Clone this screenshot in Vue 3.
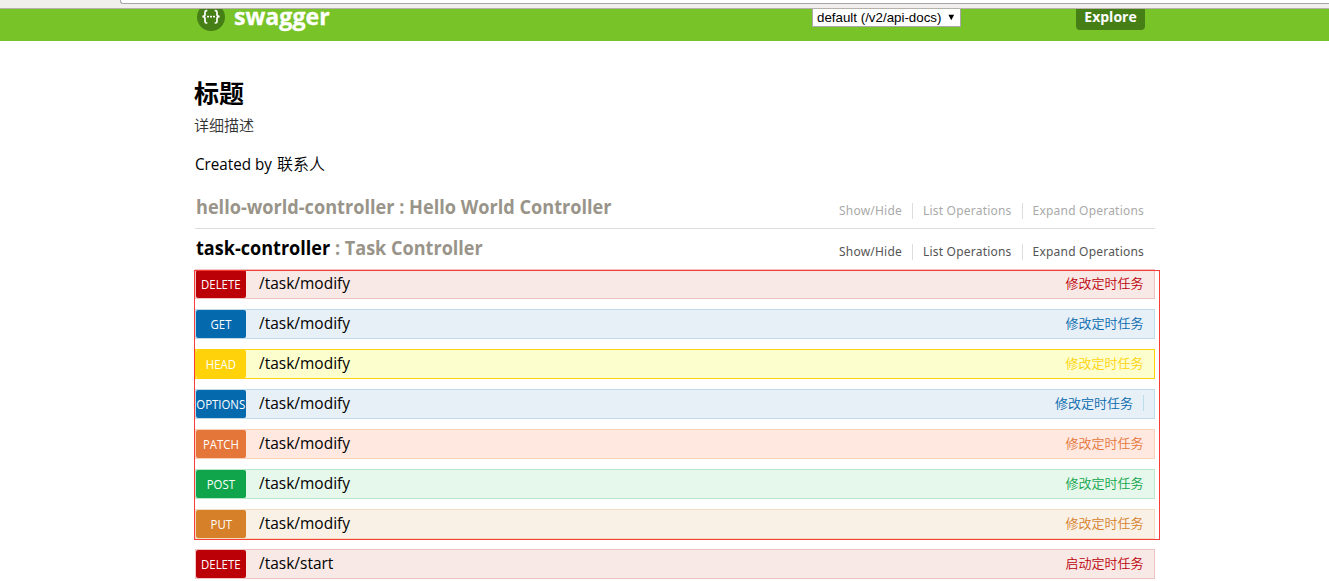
<script setup>
const operations = [
  { method: 'DELETE', path: '/task/modify', summary: '修改定时任务' },
  { method: 'GET', path: '/task/modify', summary: '修改定时任务' },
  { method: 'HEAD', path: '/task/modify', summary: '修改定时任务' },
  { method: 'OPTIONS', path: '/task/modify', summary: '修改定时任务' },
  { method: 'PATCH', path: '/task/modify', summary: '修改定时任务' },
  { method: 'POST', path: '/task/modify', summary: '修改定时任务' },
  { method: 'PUT', path: '/task/modify', summary: '修改定时任务' },
  { method: 'DELETE', path: '/task/start', summary: '启动定时任务' },
]
const resources = [
  { name: 'hello-world-controller', title: 'Hello World Controller', active: false, operations: [] },
  { name: 'task-controller', title: 'Task Controller', active: true, operations },
]
const links = ['Show/Hide', 'List Operations', 'Expand Operations']
</script>

<template>
  <div class="page">
    <div class="chrome"><div class="address"></div></div>
    <header class="bar">
      <div class="bar-inner">
        <svg class="logo" width="28" height="22" viewBox="0 0 28 22">
          <circle cx="14" cy="8" r="14" fill="#467f16" />
          <g fill="none" stroke="#fff" stroke-width="1.7">
            <path d="M10.3 1.6H9.6Q8 1.6 8 3.2V5.6Q8 7.6 5.4 7.6Q8 7.6 8 9.6V12.4Q8 14 9.6 14H10.3" />
            <path d="M17.7 1.6H18.4Q20 1.6 20 3.2V5.6Q20 7.6 22.6 7.6Q20 7.6 20 9.6V12.4Q20 14 18.4 14H17.7" />
          </g>
          <g fill="#fff">
            <rect x="10" y="6.8" width="2" height="1.6" />
            <rect x="13" y="6.8" width="2" height="1.6" />
            <rect x="16" y="6.8" width="2" height="1.6" />
          </g>
        </svg>
        <span class="brand">swagger</span>
        <div class="select"><span>default (/v2/api-docs)</span>
          <svg width="8" height="7" viewBox="0 0 8 7"><path d="M0.5 0H7.5L4 7Z" fill="#000" /></svg>
        </div>
        <div class="explore"><span>Explore</span></div>
      </div>
    </header>

    <main class="content">
      <h1 class="title">标题</h1>
      <p class="desc">详细描述</p>
      <p class="author"><span class="latin">Created by</span>联系人</p>

      <section v-for="r in resources" :key="r.name" class="resource" :class="{ active: r.active }">
        <div class="heading">
          <h2><span class="name">{{ r.name }}</span> : {{ r.title }}</h2>
          <ul class="links">
            <li v-for="l in links" :key="l"><span>{{ l }}</span></li>
          </ul>
        </div>
        <div v-if="r.operations.length" class="operations">
          <div v-for="(o, i) in r.operations" :key="i" class="op" :class="o.method.toLowerCase()">
            <span class="method"><span>{{ o.method }}</span></span>
            <span class="path">{{ o.path }}</span>
            <span class="summary">{{ o.summary }}</span>
          </div>
          <div class="marker"></div>
        </div>
      </section>
    </main>
  </div>
</template>

<style>
body { background: #fff; overflow: hidden; }
</style>

<style scoped>
.page {
  height: 581px;
  overflow: hidden;
  font-family: "Noto Sans", "Noto Sans CJK SC", sans-serif;
  color: #000;
}
.page * { box-sizing: border-box; }
h1, h2, p, ul { margin: 0; padding: 0; }
.chrome { height: 9px; background: #f0efee; border-bottom: 1px solid #b5b2ae; }
.address {
  height: 4px;
  margin-left: 120px;
  background: #fff;
  border: solid #a5a5aa;
  border-width: 0 0 1px 1px;
  border-radius: 0 0 0 3px;
}
.bar { height: 32px; background: #78c428; }
.bar-inner { display: flex; align-items: flex-start; width: 948px; margin-left: 197px; }
.brand {
  width: 96px;
  margin: -1px 0 0 9px;
  font: 700 24px/16px "Open Sans", sans-serif;
  -webkit-text-stroke: 0.3px #fff;
  transform: scaleX(0.965);
  transform-origin: 0 0;
  color: #fff;
}
.select {
  display: flex;
  align-items: center;
  gap: 7px;
  width: 149px;
  height: 18px;
  margin-left: 482px;
  padding: 1px 5px 1px 4px;
  border: 1px solid #a9a9a9;
  border-top: 0;
  background: #fff;
  font: 13.33px/16px "Liberation Sans", sans-serif;
  white-space: nowrap;
}
.explore {
  width: 69px;
  height: 21px;
  margin-left: auto;
  border-radius: 0 0 4px 4px;
  background: #467f16;
  color: #fff;
  text-align: center;
  font-family: "Open Sans", sans-serif;
  font-weight: 700;
  font-size: 14px;
  line-height: 16px;
}
.content { width: 960px; margin-left: 195px; }
.title { margin-left: -1px; padding-top: 33px; font-size: 25px; line-height: 38px; }
.desc { height: 26px; margin-left: -1px; color: #333; font-size: 15px; font-weight: 350; line-height: 26px; }
.author {
  height: 50px;
  font-family: "Open Sans", "Noto Sans CJK SC", sans-serif;
  font-size: 16px;
  font-weight: 350;
  line-height: 52px;
}
.latin {
  display: inline-block;
  width: 82px;
  font-weight: 400;
  transform: scaleX(0.95);
  transform-origin: 0 0;
}
.heading {
  display: flex;
  justify-content: space-between;
  height: 41px;
  border-bottom: 1px solid #ddd;
}
.active .heading { height: 40px; border-bottom: 0; }
h2 {
  padding-left: 1px;
  color: #999489;
  font-family: "Open Sans", sans-serif;
  font-size: 19px;
  line-height: 38px;
  white-space: nowrap;
  transform: scaleX(0.955);
  transform-origin: 0 0;
}
.active h2 { transform: scaleX(0.951); }
.active .name { color: #000; }
.links {
  display: flex;
  padding: 15px 11px 0 0;
  list-style: none;
  color: #aaa;
  font-size: 12px;
  letter-spacing: 0.21px;
}
.active .links { color: #555; }
.links li { height: 16px; line-height: 16px; white-space: nowrap; }
.links li + li { margin-left: 10px; padding-left: 10px; border-left: 1px solid #ddd; }
.operations { position: relative; }
.op {
  display: flex;
  height: 30px;
  margin-bottom: 10px;
  border: 1px solid var(--line);
  background: var(--bg);
}
.method {
  display: flex;
  justify-content: center;
  width: 50px;
  border-radius: 2px;
  background: var(--main);
  color: #fff;
  font-family: "Open Sans", sans-serif;
  font-size: 12px;
  font-weight: 500;
  line-height: 29px;
}
.method span { transform: scaleX(0.95); }
.path {
  margin-left: 13px;
  font-family: "Open Sans", sans-serif;
  font-size: 16px;
  line-height: 26px;
  transform: scaleX(0.968);
  transform-origin: 0 0;
}
.summary {
  height: 16px;
  margin: 5px 10.5px 0 auto;
  color: var(--main);
  font-size: 13px;
  font-weight: 350;
  line-height: 16px;
}
.options .summary { margin-right: 10px; padding-right: 10px; border-right: 1px solid var(--line); }
.delete { --main: #bb0008; --bg: #f8e8e6; --line: #efc3c3; }
.get, .options { --main: #0569ae; --bg: #e7eff7; --line: #bfdceb; }
.head { --main: #ffd20a; --bg: #fcffcd; --line: #ffd20a; }
.patch { --main: #e5763a; --bg: #fee8e0; --line: #fbd0b8; }
.post { --main: #10a54a; --bg: #e6f7eb; --line: #b9e8ca; }
.put { --main: #d6802a; --bg: #f9f1e6; --line: #f2ddc3; }
.marker {
  position: absolute;
  top: 1px;
  left: -1px;
  width: 966px;
  height: 270px;
  border: 1px solid #f83c38;
}
</style>
